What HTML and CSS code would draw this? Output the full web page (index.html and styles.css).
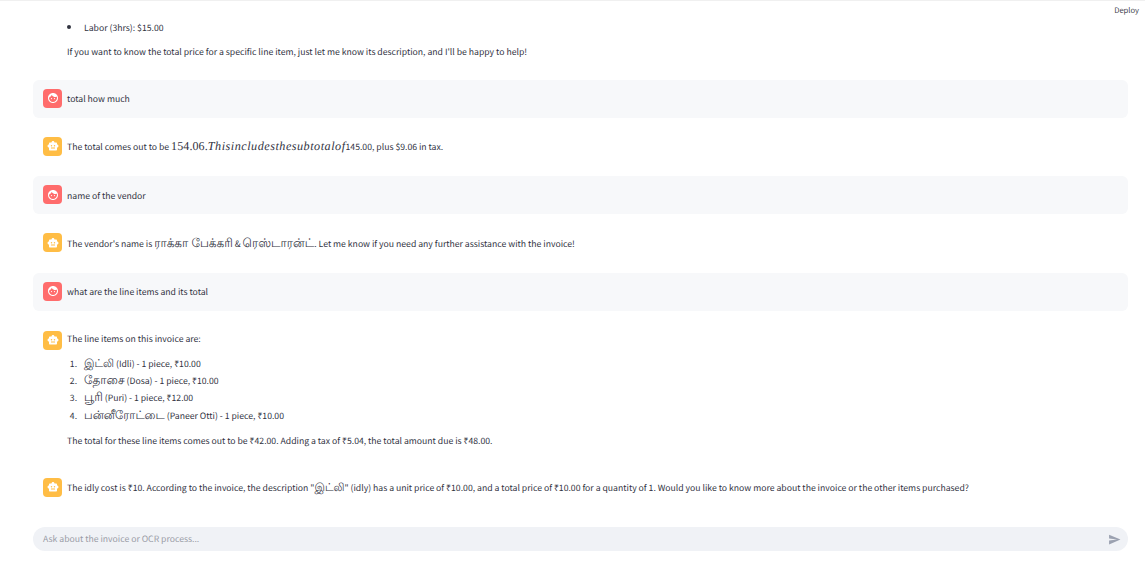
FILE: index.html
```html
<!DOCTYPE html>
<html lang="en">
<head>
<meta charset="utf-8">
<title>Invoice chat</title>
<link rel="stylesheet" href="styles.css">
</head>
<body>
<svg class="defs" width="0" height="0" aria-hidden="true">
  <symbol id="face" viewBox="0 0 24 24"><path d="M9 11.75c-.69 0-1.25.56-1.25 1.25s.56 1.25 1.25 1.25 1.25-.56 1.25-1.25-.56-1.25-1.25-1.25zm6 0c-.69 0-1.25.56-1.25 1.25s.56 1.25 1.25 1.25 1.25-.56 1.25-1.25-.56-1.25-1.25-1.25zM12 2C6.48 2 2 6.48 2 12s4.48 10 10 10 10-4.48 10-10S17.52 2 12 2zm0 18c-4.41 0-8-3.59-8-8 0-.29.02-.58.05-.86 2.36-1.05 4.23-2.98 5.21-5.37C11.07 8.33 14.05 10 17.42 10c.78 0 1.53-.09 2.25-.26.21.71.33 1.47.33 2.26 0 4.41-3.59 8-8 8z"/></symbol>
  <symbol id="bot" viewBox="0 0 24 24"><path d="M20 9V7c0-1.1-.9-2-2-2h-3c0-1.66-1.34-3-3-3S9 3.34 9 5H6c-1.1 0-2 .9-2 2v2c-1.66 0-3 1.34-3 3s1.34 3 3 3v4c0 1.1.9 2 2 2h12c1.1 0 2-.9 2-2v-4c1.66 0 3-1.34 3-3s-1.34-3-3-3zM7.5 11.5c0-.83.67-1.5 1.5-1.5s1.5.67 1.5 1.5S9.83 13 9 13s-1.5-.67-1.5-1.5zM16 17H8v-2h8v2zm-1-4c-.83 0-1.5-.67-1.5-1.5S14.17 10 15 10s1.5.67 1.5 1.5S15.83 13 15 13z"/></symbol>
</svg>
<div class="page">
  <header class="topbar"><span class="deploy">Deploy</span></header>
  <main class="messages">
    <section class="intro">
      <ul class="list bullets"><li>Labor (3hrs): $15.00</li></ul>
      <p class="para">If you want to know the total price for a specific line item, just let me know its description, and I'll be happy to help!</p>
    </section>

    <article class="msg user">
      <span class="avatar avatar-user"><svg class="avatar-icon"><use href="#face"/></svg></span>
      <div class="body"><p>total how much</p></div>
    </article>
    <article class="msg">
      <span class="avatar avatar-bot"><svg class="avatar-icon"><use href="#bot"/></svg></span>
      <div class="body"><p>The total comes out to be <span class="math">154.06.<i class="math-it">Thisincludesthesubtotalof</i></span>145.00, plus $9.06 in tax.</p></div>
    </article>
    <article class="msg user">
      <span class="avatar avatar-user"><svg class="avatar-icon"><use href="#face"/></svg></span>
      <div class="body"><p>name of the vendor</p></div>
    </article>
    <article class="msg">
      <span class="avatar avatar-bot"><svg class="avatar-icon"><use href="#bot"/></svg></span>
      <div class="body"><p>The vendor's name is <span class="ta">ராக்கா பேக்கரி</span> &amp; <span class="ta">ரெஸ்டாரன்ட்</span>. Let me know if you need any further assistance with the invoice!</p></div>
    </article>
    <article class="msg user">
      <span class="avatar avatar-user"><svg class="avatar-icon"><use href="#face"/></svg></span>
      <div class="body"><p>what are the line items and its total</p></div>
    </article>
    <article class="msg multi">
      <span class="avatar avatar-bot"><svg class="avatar-icon"><use href="#bot"/></svg></span>
      <div class="body">
        <p class="para">The line items on this invoice are:</p>
        <ol class="list">
          <li><span class="ta ta-s">இட்லி</span> (Idli) - 1 piece, ₹10.00</li>
          <li><span class="ta">தோசை</span> (Dosa) - 1 piece, ₹10.00</li>
          <li><span class="ta">பூரி</span> (Puri) - 1 piece, ₹12.00</li>
          <li><span class="ta ta-m">பன்னீரோட்டை</span> (Paneer Otti) - 1 piece, ₹10.00</li>
        </ol>
        <p class="para">The total for these line items comes out to be ₹42.00. Adding a tax of ₹5.04, the total amount due is ₹48.00.</p>
      </div>
    </article>
    <article class="msg">
      <span class="avatar avatar-bot"><svg class="avatar-icon"><use href="#bot"/></svg></span>
      <div class="body"><p>The idly cost is ₹10. According to the invoice, the description "<span class="ta ta-s">இட்லி</span>" (idly) has a unit price of ₹10.00, and a total price of ₹10.00 for a quantity of 1. Would you like to know more about the invoice or the other items purchased?</p></div>
    </article>
  </main>
  <footer class="composer">
    <div class="input">
      <span class="placeholder">Ask about the invoice or OCR process...</span>
      <svg class="send" viewBox="0 0 24 24"><path d="M2.01 21L23 12 2.01 3 2 10l15 2-15 2z"/></svg>
    </div>
  </footer>
</div>
</body>
</html>
```
FILE: styles.css
```css
* { box-sizing: border-box; }
html, body { margin: 0; height: 100%; }
body {
  font-family: "Noto Sans CJK SC", "Noto Sans", sans-serif;
  font-size: 8.67px;
  line-height: 16px;
  color: #31333f;
  background: #fff;
  overflow: hidden;
  text-rendering: geometricPrecision;
}
.defs { position: absolute; }
.page {
  position: relative;
  height: 573px;
  display: flex;
  flex-direction: column;
  border-top: 1px solid #f0f0f0;
  padding: 0 17px 22px 33px;
}
.topbar { position: absolute; top: 1px; right: 6px; }
.deploy { font-size: 7.6px; color: #44464f; }
.messages { flex: 1; display: flex; flex-direction: column; gap: 10px; overflow: hidden; padding-top: 18px; }
.intro { padding-left: 34px; height: 50.5px; flex: none; }
.list { margin: 0 0 0 12px; padding: 0; }
.list li { height: 17.3px; padding-left: 5px; }
.bullets { margin: 0 0 8px 15px; }
.bullets li { padding-left: 2px; }
.bullets li::marker { font-size: 10px; }
p { margin: 0; }
.msg { display: flex; gap: 5px; padding: 9px 10px 10px; border-radius: 6px; min-height: 38.25px; align-items: flex-start; flex: none; }
.msg.user { background: #f7f8fa; }
.multi { padding-top: 10px; }
.avatar { flex: none; width: 19px; height: 19px; border-radius: 4px; display: flex; align-items: center; justify-content: center; }
.avatar-user { background: #ff6c6c; }
.avatar-bot { background: #ffbd45; }
.avatar-icon { width: 12px; height: 12px; fill: #fff; }
.body { padding-top: 2.5px; flex: 1; }
.multi .body { padding-top: 0; }
.multi .para:first-child { margin-bottom: 9px; }
.multi .list { margin-bottom: 8px; }
.math { font-family: "Liberation Serif", serif; font-size: 12px; letter-spacing: 0.1px; line-height: 0; }
.math-it { font-size: 12.2px; letter-spacing: 0.5px; }
.ta { font-family: "Noto Sans", sans-serif; font-size: 12px; line-height: 0; }
.ta-s { font-size: 10.8px; }
.ta-m { font-size: 11.6px; }
.composer { height: 24px; flex: none; }
.input { height: 24px; background: #f0f2f6; border-radius: 12px; display: flex; align-items: center; justify-content: space-between; padding: 0 7px 0 10px; }
.placeholder { color: #9a9ca6; }
.send { width: 13px; height: 13px; fill: #9ba1b0; }
```
